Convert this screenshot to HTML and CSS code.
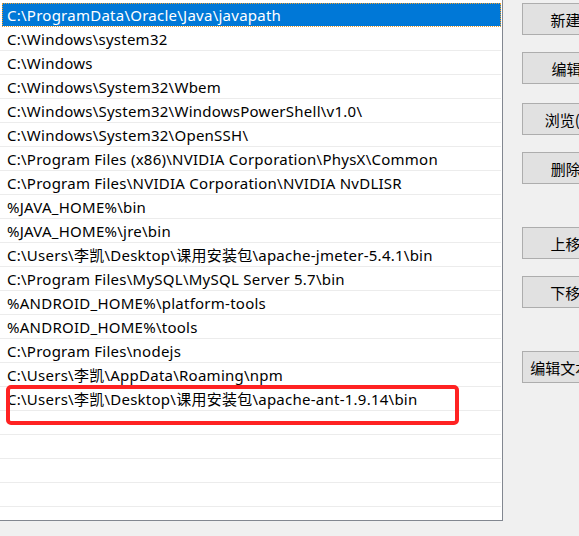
FILE: index.html
```html
<!DOCTYPE html>
<html lang="zh-CN">
<head>
<meta charset="utf-8">
<title>编辑环境变量</title>
<link rel="stylesheet" href="styles.css">
</head>
<body>
<div class="window">
  <div class="list">
    <div class="row selected">C:\ProgramData\Oracle\Java\javapath</div>
    <div class="row">C:\Windows\system32</div>
    <div class="row">C:\Windows</div>
    <div class="row">C:\Windows\System32\Wbem</div>
    <div class="row">C:\Windows\System32\WindowsPowerShell\v1.0\</div>
    <div class="row">C:\Windows\System32\OpenSSH\</div>
    <div class="row">C:\Program Files (x86)\NVIDIA Corporation\PhysX\Common</div>
    <div class="row">C:\Program Files\NVIDIA Corporation\NVIDIA NvDLISR</div>
    <div class="row">%JAVA_HOME%\bin</div>
    <div class="row">%JAVA_HOME%\jre\bin</div>
    <div class="row">C:\Users\李凯\Desktop\课用安装包\apache-jmeter-5.4.1\bin</div>
    <div class="row">C:\Program Files\MySQL\MySQL Server 5.7\bin</div>
    <div class="row">%ANDROID_HOME%\platform-tools</div>
    <div class="row">%ANDROID_HOME%\tools</div>
    <div class="row">C:\Program Files\nodejs</div>
    <div class="row">C:\Users\李凯\AppData\Roaming\npm</div>
    <div class="row">C:\Users\李凯\Desktop\课用安装包\apache-ant-1.9.14\bin</div>
    <div class="row"></div>
    <div class="row"></div>
    <div class="row"></div>
    <div class="row"></div>
    <div class="highlight"></div>
  </div>
  <div class="buttons">
    <button class="btn first">新建(N)</button>
    <button class="btn gap-s">编辑(E)</button>
    <button class="btn gap-m">浏览(B)...</button>
    <button class="btn gap-s">删除(D)</button>
    <button class="btn gap-l">上移(U)</button>
    <button class="btn gap-s">下移(O)</button>
    <button class="btn gap-l">编辑文本(T)...</button>
  </div>
</div>
</body>
</html>
```

FILE: styles.css
```css
html, body {
  margin: 0;
  padding: 0;
  background: #f0f0f0;
  overflow: hidden;
  width: 579px;
  height: 536px;
}

body {
  font-family: "Noto Sans", "Noto Sans CJK SC", sans-serif;
  font-size: 15px;
  color: #000;
}

.window {
  display: flex;
  align-items: flex-start;
  width: 700px;
}

.list {
  position: relative;
  width: 502px;
  height: 517px;
  padding-top: 3px;
  background: #fff;
  border-right: 1px solid #828790;
  border-bottom: 1px solid #828790;
  overflow: hidden;
  flex-shrink: 0;
}

.row {
  box-sizing: border-box;
  height: 24px;
  width: 501px;
  line-height: 24px;
  padding-left: 7px;
  border-bottom: 1px solid #ececec;
  white-space: nowrap;
  letter-spacing: 0.25px;
}

.row.selected {
  margin-left: 2px;
  width: 499px;
  padding-left: 5px;
  background: #0078d7;
  color: #fff;
  border-bottom-color: #fff;
  outline: 1px dotted #f0a030;
  outline-offset: -1px;
}

.highlight {
  position: absolute;
  left: 6px;
  top: 385px;
  width: 445px;
  height: 32px;
  border: 4px solid #ff2222;
  border-radius: 5px;
  pointer-events: none;
}

.buttons {
  display: flex;
  flex-direction: column;
  margin-left: 19px;
  padding-top: 3px;
}

.btn {
  box-sizing: border-box;
  width: 108px;
  height: 32px;
  padding: 0;
  background: #e1e1e1;
  border: 1px solid #adadad;
  font-family: "Noto Sans CJK SC", "Noto Sans", sans-serif;
  font-size: 15px;
  color: #000;
  text-align: center;
  white-space: nowrap;
  overflow: hidden;
}

.gap-s { margin-top: 17px; }
.gap-m { margin-top: 19px; }
.gap-l { margin-top: 43px; }
```
